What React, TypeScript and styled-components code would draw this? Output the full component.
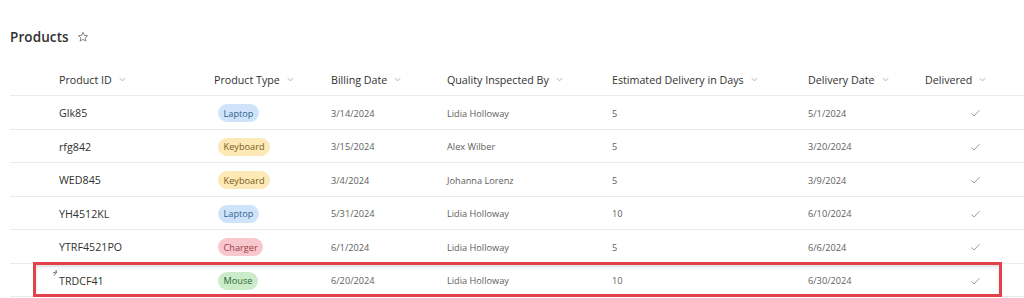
import React from 'react';
import styled, { createGlobalStyle } from 'styled-components';

const GlobalStyle = createGlobalStyle`
  html, body {
    margin: 0;
    padding: 0;
    background: #ffffff;
  }
  body {
    font-family: 'Open Sans', 'Noto Sans', 'Liberation Sans', sans-serif;
    color: #323130;
  }
`;

const COLUMNS = '49px 155px 117px 116px 165px 196px 117px 1fr';

const Page = styled.div`
  width: 1024px;
  height: 298px;
  overflow: hidden;
  padding-left: 10px;
  box-sizing: border-box;
`;

const TitleBar = styled.div`
  display: flex;
  align-items: center;
  gap: 8px;
  height: 30px;
  padding-top: 22px;
`;

const Title = styled.h1`
  margin: 0;
  font-size: 13.5px;
  font-weight: 600;
  color: #323130;
  letter-spacing: 0.1px;
`;

const Table = styled.div`
  display: flex;
  flex-direction: column;
  margin-top: 10px;
`;

const HeaderRow = styled.div`
  display: grid;
  grid-template-columns: ${COLUMNS};
  align-items: center;
  height: 34px;
  padding-top: 8px;
  border-bottom: 1px solid #edebe9;
  box-sizing: border-box;
`;

const HeaderCell = styled.div`
  display: flex;
  align-items: center;
  gap: 6px;
  font-size: 10.7px;
  font-weight: 400;
  color: #323130;
  white-space: nowrap;
`;

const Row = styled.div`
  position: relative;
  display: grid;
  grid-template-columns: ${COLUMNS};
  align-items: center;
  height: 33.5px;
  padding-top: 6px;
  border-bottom: 1px solid #edebe9;
  box-sizing: border-box;
`;

const Cell = styled.div<{ primary?: boolean; center?: boolean }>`
  display: flex;
  align-items: center;
  font-size: ${p => (p.primary ? '10.7px' : '9.2px')};
  color: ${p => (p.primary ? '#323130' : '#605e5c')};
  white-space: nowrap;
  position: relative;
  ${p => p.center && 'padding-left: 45px;'}
`;

const pillColors: Record<string, { bg: string; fg: string }> = {
  Laptop: { bg: '#cfe4fa', fg: '#31618f' },
  Keyboard: { bg: '#fce9b5', fg: '#7a5b1e' },
  Charger: { bg: '#f8c6cd', fg: '#9b3a45' },
  Mouse: { bg: '#caecc9', fg: '#2f6b36' },
};

const Pill = styled.span<{ kind: string }>`
  display: inline-flex;
  align-items: center;
  height: 18px;
  padding: 0 5.5px;
  margin-left: 4px;
  border-radius: 9px;
  font-size: 9.2px;
  background: ${p => pillColors[p.kind].bg};
  color: ${p => pillColors[p.kind].fg};
`;

const Highlight = styled.div`
  position: absolute;
  left: 23px;
  width: 969px;
  top: -2px;
  bottom: -1px;
  box-sizing: border-box;
  border: 3px solid #e2434a;
  box-shadow: inset 0 2px 3px rgba(120, 120, 140, 0.25);
  pointer-events: none;
`;

const EditMark = styled.span`
  position: absolute;
  left: -7px;
  top: -5px;
  display: flex;
`;

const Chevron = () => (
  <svg width="9" height="9" viewBox="0 0 10 10">
    <path d="M2 3.5 L5 6.5 L8 3.5" fill="none" stroke="#a19f9d" strokeWidth="0.9" />
  </svg>
);

const Check = () => (
  <svg width="11" height="10" viewBox="0 0 12 10">
    <path d="M1.5 5.5 L4.5 8.2 L10.5 1.8" fill="none" stroke="#8a8886" strokeWidth="0.9" />
  </svg>
);

const Star = () => (
  <svg width="12" height="12" viewBox="0 0 20 20">
    <path
      d="M10 2.2 L12.3 7.2 L17.7 7.8 L13.6 11.4 L14.8 16.8 L10 14 L5.2 16.8 L6.4 11.4 L2.3 7.8 L7.7 7.2 Z"
      fill="none"
      stroke="#605e5c"
      strokeWidth="1.2"
      strokeLinejoin="round"
    />
  </svg>
);

const Sparkle = () => (
  <svg width="9" height="8" viewBox="0 0 9 8">
    <path d="M1 4 L4 3 M4 1 L4.5 4 M2 6.5 L4 4" fill="none" stroke="#605e5c" strokeWidth="0.9" />
  </svg>
);

const headers = [
  'Product ID',
  'Product Type',
  'Billing Date',
  'Quality Inspected By',
  'Estimated Delivery in Days',
  'Delivery Date',
  'Delivered',
];

const rows = [
  { id: 'Glk85', type: 'Laptop', billing: '3/14/2024', inspector: 'Lidia Holloway', days: '5', delivery: '5/1/2024' },
  { id: 'rfg842', type: 'Keyboard', billing: '3/15/2024', inspector: 'Alex Wilber', days: '5', delivery: '3/20/2024' },
  { id: 'WED845', type: 'Keyboard', billing: '3/4/2024', inspector: 'Johanna Lorenz', days: '5', delivery: '3/9/2024' },
  { id: 'YH4512KL', type: 'Laptop', billing: '5/31/2024', inspector: 'Lidia Holloway', days: '10', delivery: '6/10/2024' },
  { id: 'YTRF4521PO', type: 'Charger', billing: '6/1/2024', inspector: 'Lidia Holloway', days: '5', delivery: '6/6/2024' },
  { id: 'TRDCF41', type: 'Mouse', billing: '6/20/2024', inspector: 'Lidia Holloway', days: '10', delivery: '6/30/2024' },
];

const App: React.FC = () => {
  return (
    <>
      <GlobalStyle />
      <Page>
        <TitleBar>
          <Title>Products</Title>
          <Star />
        </TitleBar>
        <Table>
          <HeaderRow>
            <div />
            {headers.map(h => (
              <HeaderCell key={h}>
                {h}
                <Chevron />
              </HeaderCell>
            ))}
            <div />
          </HeaderRow>
          {rows.map((r, i) => {
            const last = i === rows.length - 1;
            return (
              <Row key={r.id}>
                <div />
                <Cell primary>
                  {last && (
                    <EditMark>
                      <Sparkle />
                    </EditMark>
                  )}
                  {r.id}
                </Cell>
                <Cell>
                  <Pill kind={r.type}>{r.type}</Pill>
                </Cell>
                <Cell>{r.billing}</Cell>
                <Cell>{r.inspector}</Cell>
                <Cell>{r.days}</Cell>
                <Cell>{r.delivery}</Cell>
                <Cell center>
                  <Check />
                </Cell>
                <div />
                {last && <Highlight />}
              </Row>
            );
          })}
        </Table>
      </Page>
    </>
  );
};

export default App;
